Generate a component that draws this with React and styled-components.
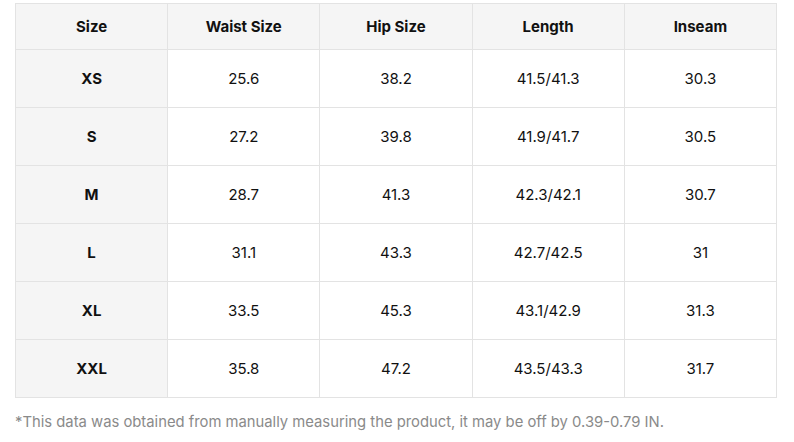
import React from 'react'
import styled, { createGlobalStyle } from 'styled-components';

const GlobalStyle = createGlobalStyle`
  body{
    margin: 0;
    background: #fff;
    font-family: Inter, 'Liberation Sans', sans-serif;
  }
`

const rows = [
  ['XS', '25.6', '38.2', '41.5/41.3', '30.3'],
  ['S', '27.2', '39.8', '41.9/41.7', '30.5'],
  ['M', '28.7', '41.3', '42.3/42.1', '30.7'],
  ['L', '31.1', '43.3', '42.7/42.5', '31'],
  ['XL', '33.5', '45.3', '43.1/42.9', '31.3'],
  ['XXL', '35.8', '47.2', '43.5/43.3', '31.7'],
]

const headers = ['Size', 'Waist Size', 'Hip Size', 'Length', 'Inseam']

export default function App() {
  return (
    <Page>
      <GlobalStyle />
      <Table>
        <thead>
          <tr>
            {headers.map((h) => <HeadCell key={h}>{h}</HeadCell>)}
          </tr>
        </thead>
        <tbody>
          {rows.map((r) => (
            <tr key={r[0]}>
              {r.map((v, i) => (
                <Cell key={i} $label={i === 0}>{v}</Cell>
              ))}
            </tr>
          ))}
        </tbody>
      </Table>
      <Note>*This data was obtained from manually measuring the product, it may be off by 0.39-0.79 IN.</Note>
    </Page>
  )
}

const Page = styled.div`
  padding: 3px 17px 0 15px;
`

const Table = styled.table`
  width: 762px;
  border-collapse: collapse;
  table-layout: fixed;
  font-size: 15px;
  color: #111;
`

const HeadCell = styled.th`
  height: 45px;
  padding: 0;
  background: #f5f5f5;
  border: 1px solid #e3e3e3;
  font-weight: 700;
  text-align: center;
`

const Cell = styled.td`
  height: 57px;
  padding: 0;
  border: 1px solid #e3e3e3;
  text-align: center;
  background: ${(p) => (p.$label ? '#f5f5f5' : '#fff')};
  font-weight: ${(p) => (p.$label ? 700 : 400)};
`

const Note = styled.p`
  margin: 15px 0 0;
  font-size: 14.8px;
  color: #8a8a8a;
`
